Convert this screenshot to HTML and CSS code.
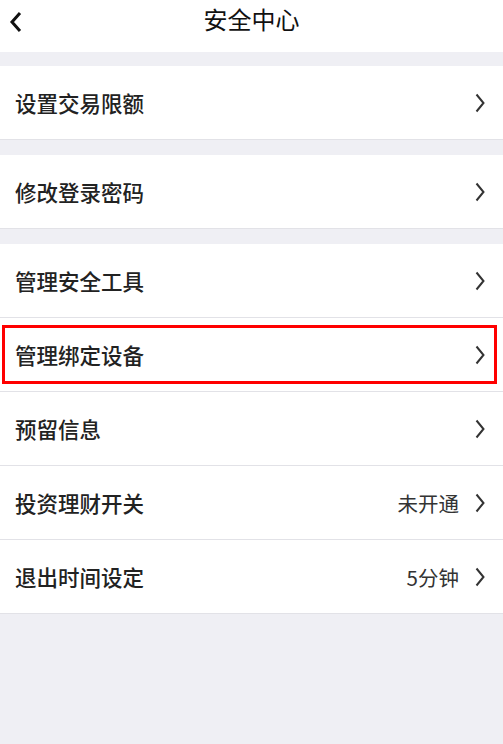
FILE: index.html
```html
<!DOCTYPE html>
<html lang="zh-CN">
<head>
<meta charset="utf-8">
<title>安全中心</title>
<link rel="stylesheet" href="styles.css">
</head>
<body>
<div class="page">
  <header class="header">
    <span class="back">
      <svg width="14" height="22" viewBox="0 0 14 22"><path d="M11 2 L3 11 L11 20" fill="none" stroke="#111" stroke-width="3" stroke-linejoin="miter"/></svg>
    </span>
    <h1 class="title">安全中心</h1>
  </header>

  <div class="group">
    <div class="row"><span class="label">设置交易限额</span><span class="right"><svg class="chev" width="10" height="20" viewBox="0 0 10 20"><path d="M1.5 1.5 L8.5 10 L1.5 18.5" fill="none" stroke="#333" stroke-width="2"/></svg></span></div>
  </div>

  <div class="group">
    <div class="row"><span class="label">修改登录密码</span><span class="right"><svg class="chev" width="10" height="20" viewBox="0 0 10 20"><path d="M1.5 1.5 L8.5 10 L1.5 18.5" fill="none" stroke="#333" stroke-width="2"/></svg></span></div>
  </div>

  <div class="group">
    <div class="row"><span class="label">管理安全工具</span><span class="right"><svg class="chev" width="10" height="20" viewBox="0 0 10 20"><path d="M1.5 1.5 L8.5 10 L1.5 18.5" fill="none" stroke="#333" stroke-width="2"/></svg></span></div>
    <div class="row highlighted"><span class="label">管理绑定设备</span><span class="right"><svg class="chev" width="10" height="20" viewBox="0 0 10 20"><path d="M1.5 1.5 L8.5 10 L1.5 18.5" fill="none" stroke="#333" stroke-width="2"/></svg></span><span class="mark"></span></div>
    <div class="row"><span class="label">预留信息</span><span class="right"><svg class="chev" width="10" height="20" viewBox="0 0 10 20"><path d="M1.5 1.5 L8.5 10 L1.5 18.5" fill="none" stroke="#333" stroke-width="2"/></svg></span></div>
    <div class="row"><span class="label">投资理财开关</span><span class="right"><span class="value">未开通</span><svg class="chev" width="10" height="20" viewBox="0 0 10 20"><path d="M1.5 1.5 L8.5 10 L1.5 18.5" fill="none" stroke="#333" stroke-width="2"/></svg></span></div>
    <div class="row"><span class="label">退出时间设定</span><span class="right"><span class="value">5分钟</span><svg class="chev" width="10" height="20" viewBox="0 0 10 20"><path d="M1.5 1.5 L8.5 10 L1.5 18.5" fill="none" stroke="#333" stroke-width="2"/></svg></span></div>
  </div>
</div>
</body>
</html>
```

FILE: styles.css
```css
* { box-sizing: border-box; }
html, body {
  margin: 0;
  padding: 0;
  background: #efeff4;
  font-family: "Noto Sans CJK SC", "Noto Sans", sans-serif;
  color: #222;
}
.page {
  width: 503px;
  min-height: 744px;
  background: #efeff4;
}
.header {
  position: relative;
  height: 52px;
  background: #fff;
  display: flex;
  align-items: flex-start;
  justify-content: center;
}
.back {
  position: absolute;
  left: 9px;
  top: 11px;
  display: flex;
}
.title {
  margin: 0;
  padding-top: 2px;
  font-size: 24px;
  line-height: 34px;
  font-weight: 400;
  color: #111;
}
.group {
  margin-top: 14px;
  background: #fff;
  border-bottom: 1px solid #e2e2e7;
}
.group + .group { margin-top: 15px; }
.row {
  position: relative;
  height: 74px;
  display: flex;
  align-items: center;
  justify-content: space-between;
  padding: 0 18px 0 15px;
  border-bottom: 1px solid #e2e2e7;
}
.row:last-child { border-bottom: none; height: 73px; }
.label {
  font-size: 21.5px;
  font-weight: 500;
  color: #222;
  letter-spacing: 0;
}
.right {
  display: flex;
  align-items: center;
  gap: 16px;
}
.value {
  font-size: 20.5px;
  color: #333;
}
.chev { display: block; }
.mark {
  position: absolute;
  left: 2px;
  right: 6px;
  top: 7px;
  bottom: 7px;
  border: 3px solid #f00;
}
```
